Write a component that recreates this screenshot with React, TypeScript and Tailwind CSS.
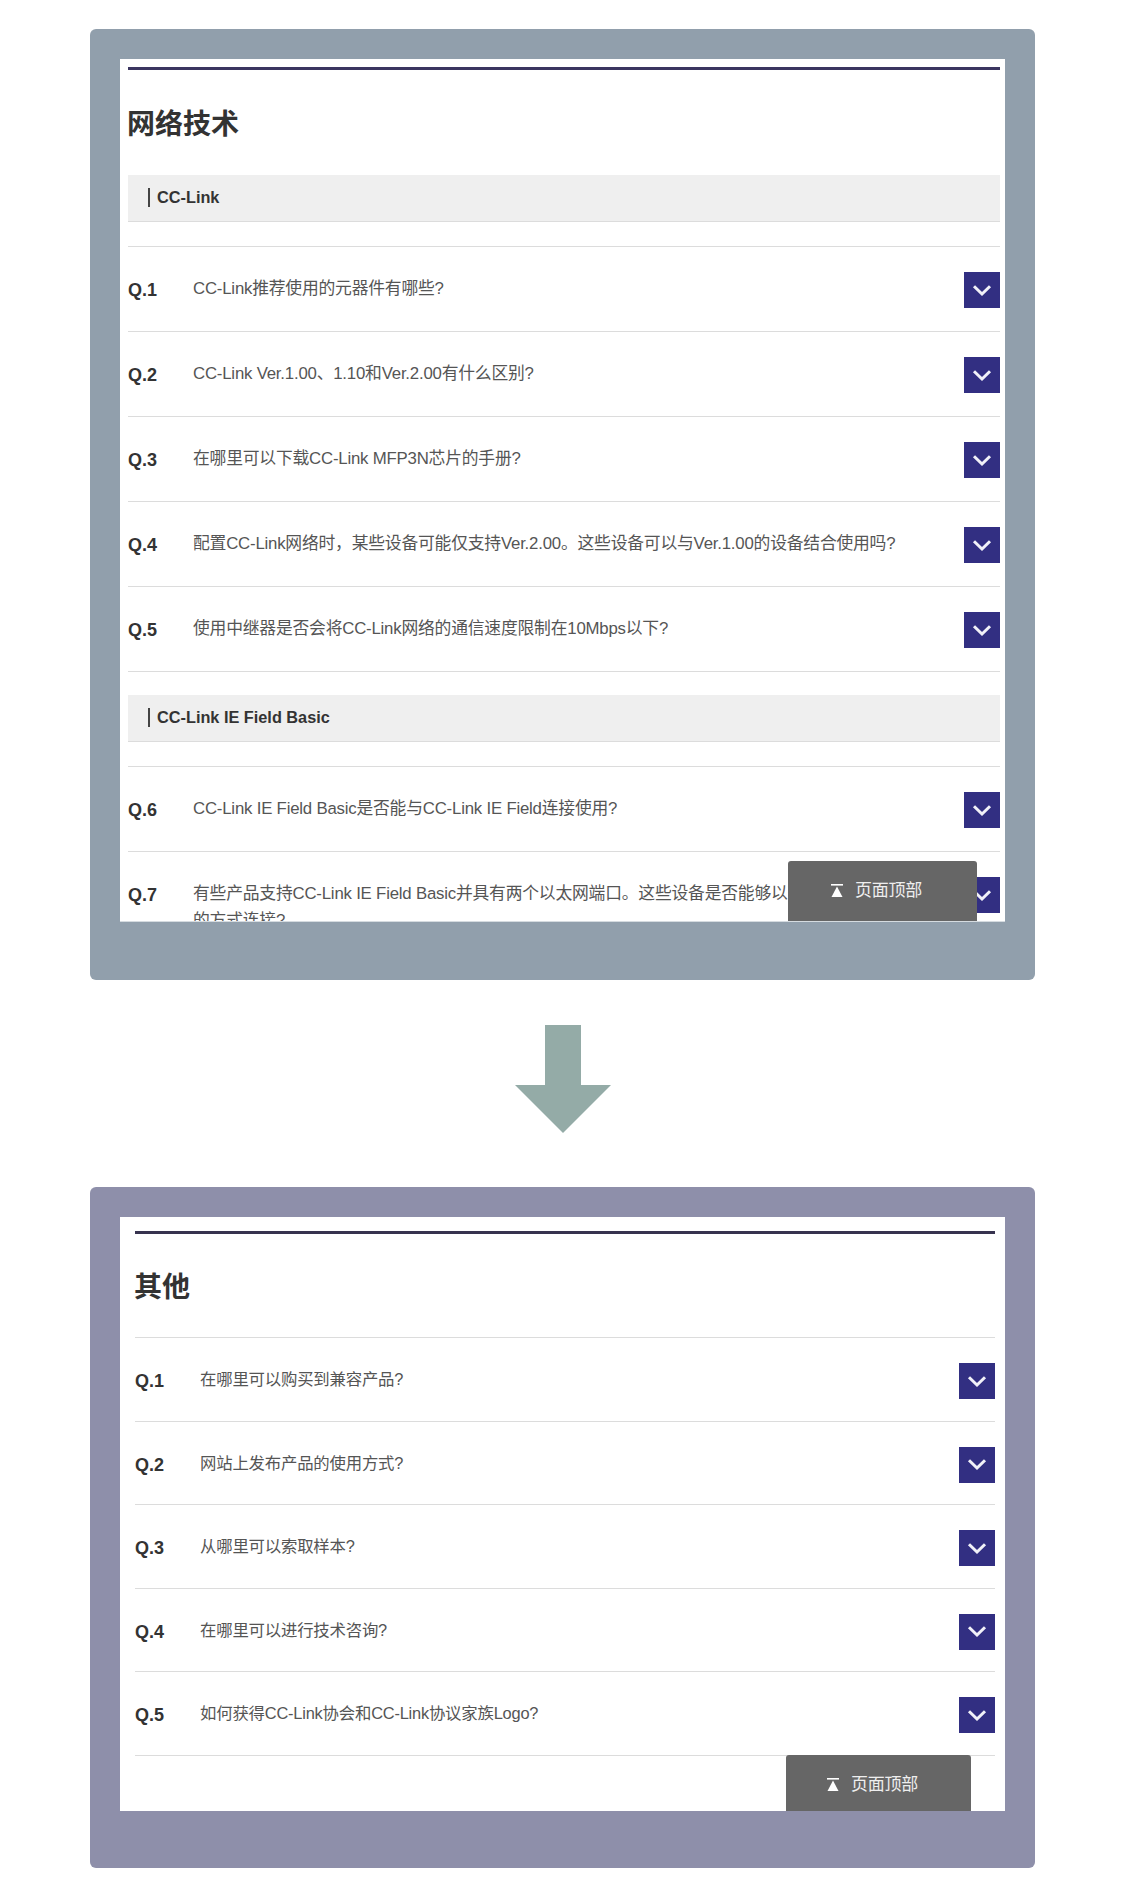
const FONT = "font-['Liberation_Sans','Noto_Sans_CJK_SC',sans-serif]";

function Chevron() {
  return (
    <span className="flex h-9 w-9 shrink-0 items-center justify-center bg-[#322f82]">
      <svg width="20" height="13" viewBox="0 0 20 13" fill="none">
        <path d="M2 2.2 L10 10 L18 2.2" stroke="#f1f1f8" strokeWidth="3" />
      </svg>
    </span>
  );
}

function Row({ no, text, tall }: { no: string; text: React.ReactNode; tall?: boolean }) {
  return (
    <li className={`flex items-start border-b border-[#dcdcdc] pt-[25px] ${tall ? 'h-[85px]' : 'h-[83.6px]'}`}>
      <span className="mt-[6px] w-[65px] shrink-0 text-[18px] leading-6 font-bold text-[#333]">{no}</span>
      <span className={`mt-[3px] flex-1 pr-2 leading-[27px] tracking-[-0.2px] text-[#555] ${tall ? 'text-[16.8px]' : 'text-[16.4px]'}`}>{text}</span>
      <Chevron />
    </li>
  );
}

function Bar({ text }: { text: string }) {
  return (
    <div className="flex h-[47px] items-center border-b border-[#dcdcdc] bg-[#efefef] pb-[2px] pl-5">
      <span className="border-l-2 border-[#444] pl-[7px] text-[16.3px] leading-[19px] font-bold text-[#333]">{text}</span>
    </div>
  );
}

function TopButton({ className }: { className: string }) {
  return (
    <div className={`absolute flex h-[61px] items-center justify-center gap-3 rounded-t-[3px] bg-[#666] pr-[12px] pb-[2px] text-[17px] text-[#eee] ${className}`}>
      <svg width="12" height="13" viewBox="0 0 12 13" fill="#fff">
        <rect x="0" y="0" width="12" height="1.6" />
        <path d="M6 2.5 L11.5 13 L0.5 13 Z" />
      </svg>
      <span className="tracking-[-0.2px]">页面顶部</span>
    </div>
  );
}

const first = [
  'CC-Link推荐使用的元器件有哪些?',
  'CC-Link Ver.1.00、1.10和Ver.2.00有什么区别?',
  '在哪里可以下载CC-Link MFP3N芯片的手册?',
  '配置CC-Link网络时，某些设备可能仅支持Ver.2.00。这些设备可以与Ver.1.00的设备结合使用吗?',
  '使用中继器是否会将CC-Link网络的通信速度限制在10Mbps以下?',
];

const others = [
  '在哪里可以购买到兼容产品?',
  '网站上发布产品的使用方式?',
  '从哪里可以索取样本?',
  '在哪里可以进行技术咨询?',
  '如何获得CC-Link协会和CC-Link协议家族Logo?',
];

export default function App() {
  return (
    <div className={`h-[1904px] w-[1125px] overflow-hidden bg-white pt-[29px] pl-[90px] ${FONT}`}>
      <section className="w-[945px] rounded-[6px] bg-[#919fac] px-[30px] pt-[30px] pb-[58px]">
        <div className="relative h-[863px] overflow-hidden border-b border-[#d5dbe0] bg-white px-2 pt-2 pr-[5px]">
          <div className="h-[3px] bg-[#3b3560]" />
          <h2 className="-ml-px pt-[41px] pb-[36px] text-[28px] leading-[28px] font-bold text-[#333]">网络技术</h2>
          <Bar text="CC-Link" />
          <ul className="mt-6 border-t border-[#dcdcdc]">
            {first.map((q, i) => (
              <Row key={q} tall no={`Q.${i + 1}`} text={q} />
            ))}
          </ul>
          <div className="mt-[23px]">
            <Bar text="CC-Link IE Field Basic" />
          </div>
          <ul className="mt-6 border-t border-[#dcdcdc]">
            <Row tall no="Q.6" text="CC-Link IE Field Basic是否能与CC-Link IE Field连接使用?" />
            <Row
              tall
              no="Q.7"
              text={
                <>
                  有些产品支持CC-Link IE Field Basic并具有两个以太网端口。这些设备是否能够以菊花链
                  <br />
                  的方式连接?
                </>
              }
            />
          </ul>
          <TopButton className="top-[802px] right-[28px] w-[189px]" />
        </div>
      </section>

      <div className="mt-[45px] mb-[54px] flex w-[945px] justify-center">
        <svg width="96" height="108" viewBox="0 0 96 108">
          <path d="M30 0 H66 V60 H96 L48 108 L0 60 H30 Z" fill="#94aba7" />
        </svg>
      </div>

      <section className="w-[945px] rounded-[6px] bg-[#8e8faa] px-[30px] pt-[30px] pb-[57px]">
        <div className="relative h-[594px] overflow-hidden bg-white pt-[14px] pr-[10px] pl-[15px]">
          <div className="h-[3px] bg-[#37334f]" />
          <h2 className="-ml-px pt-[40px] pb-[35px] text-[28px] leading-[28px] font-bold text-[#333]">其他</h2>
          <ul className="border-t border-[#dcdcdc]">
            {others.map((q, i) => (
              <Row key={q} no={`Q.${i + 1}`} text={q} />
            ))}
          </ul>
          <TopButton className="top-[538px] right-[34px] w-[185px]" />
        </div>
      </section>
    </div>
  );
}
